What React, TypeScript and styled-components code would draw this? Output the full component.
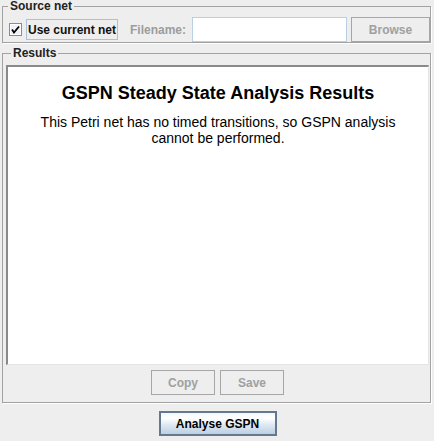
import React from "react";
import styled, { createGlobalStyle } from "styled-components";

const Global = createGlobalStyle`
  html, body { margin: 0; padding: 0; background: #eeeeee; }
  body { font-family: "Liberation Sans", Arial, sans-serif; }
  * { box-sizing: border-box; }
`;

const Page = styled.div`
  width: 434px;
  height: 441px;
  background: #eeeeee;
  padding: 0 3px 0 2px;
  display: flex;
  flex-direction: column;
  align-items: stretch;
`;

const Group = styled.fieldset<{ $top?: number; $pt: number; $pb: number; $pl: number; $pr: number }>`
  margin: ${(p) => p.$top ?? 0}px 0 0 0;
  padding: ${(p) => p.$pt}px ${(p) => p.$pr}px ${(p) => p.$pb}px ${(p) => p.$pl}px;
  border: 1px solid #a2a2a2;
  box-shadow: 1px 1px 0 #ffffff;
  min-width: 0;
`;

const Legend = styled.legend`
  font-size: 12px;
  line-height: 12px;
  font-weight: bold;
  color: #222222;
  padding: 0 2px;
  margin-left: 5px;
`;

const SourceRow = styled.div`
  display: flex;
  align-items: center;
  height: 25px;
`;

const CheckWrap = styled.label`
  display: flex;
  align-items: center;
  margin-left: 6px;
`;

const CheckText = styled.span`
  margin-left: 4px;
  height: 21px;
  padding: 0 1px;
  display: flex;
  align-items: center;
  border: 1px solid #a9c1db;
  font-size: 12px;
  font-weight: bold;
  color: #111111;
`;

const FieldLabel = styled.span`
  margin-left: 12px;
  font-size: 12px;
  font-weight: bold;
  color: #9c9c9c;
`;

const TextField = styled.div`
  margin-left: 6px;
  width: 155px;
  height: 25px;
  background: #ffffff;
  border: 1px solid #b8cfe5;
`;

const PlainButton = styled.button<{ $w: number; $ml?: number }>`
  width: ${(p) => p.$w}px;
  height: 25px;
  margin-left: ${(p) => p.$ml ?? 0}px;
  padding: 0;
  background: #eeeeee;
  border: 1px solid #a6a6a6;
  font-family: "Liberation Sans", Arial, sans-serif;
  font-size: 12px;
  font-weight: bold;
  color: #a0a0a0;
`;

const ResultArea = styled.div`
  height: 300px;
  background: #ffffff;
  border-top: 2px solid #8a8a8a;
  border-left: 2px solid #8a8a8a;
  border-right: 1px solid #e4e4e4;
  border-bottom: 1px solid #e4e4e4;
  display: flex;
  flex-direction: column;
  align-items: center;
  padding-top: 16px;
`;

const Title = styled.div`
  font-size: 18px;
  line-height: 21px;
  font-weight: bold;
  color: #000000;
`;

const Message = styled.div`
  margin-top: 10px;
  font-size: 14px;
  line-height: 16px;
  color: #000000;
  text-align: center;
  width: 380px;
`;

const ButtonRow = styled.div`
  display: flex;
  justify-content: center;
  gap: 5px;
  margin-top: 5px;
`;

const Footer = styled.div`
  display: flex;
  justify-content: center;
  margin-top: 8px;
`;

const PrimaryButton = styled.button`
  width: 118px;
  height: 25px;
  margin-left: 2px;
  padding: 0;
  border: 2px solid #64788f;
  background: linear-gradient(to bottom, #f4f8fc 0%, #ffffff 25%, #dbe6f1 60%, #bccfe3 100%);
  font-family: "Liberation Sans", Arial, sans-serif;
  font-size: 12px;
  font-weight: bold;
  color: #000000;
`;

const CheckIcon = () => (
  <svg width="13" height="13" viewBox="0 0 13 13">
    <rect x="0.5" y="0.5" width="12" height="12" fill="#eef3f9" stroke="#7c8ea3" />
    <rect x="1.5" y="1.5" width="10" height="10" fill="none" stroke="#ffffff" />
    <path d="M3 6.5 L5 9.5 L10 3.5" fill="none" stroke="#000000" strokeWidth="1.8" />
  </svg>
);

export default function App() {
  return (
    <>
      <Global />
      <Page>
        <Group $pt={5} $pb={0} $pl={0} $pr={0}>
          <Legend>Source net</Legend>
          <SourceRow>
            <CheckWrap>
              <CheckIcon />
              <CheckText>Use current net</CheckText>
            </CheckWrap>
            <FieldLabel>Filename:</FieldLabel>
            <TextField />
            <PlainButton $w={79} $ml={4}>Browse</PlainButton>
          </SourceRow>
        </Group>
        <Group $top={4} $pt={6} $pb={7} $pl={3} $pr={1}>
          <Legend>Results</Legend>
          <ResultArea>
            <Title>GSPN Steady State Analysis Results</Title>
            <Message>
              This Petri net has no timed transitions, so GSPN analysis cannot be performed.
            </Message>
          </ResultArea>
          <ButtonRow>
            <PlainButton $w={64}>Copy</PlainButton>
            <PlainButton $w={64}>Save</PlainButton>
          </ButtonRow>
        </Group>
        <Footer>
          <PrimaryButton>Analyse GSPN</PrimaryButton>
        </Footer>
      </Page>
    </>
  );
}
